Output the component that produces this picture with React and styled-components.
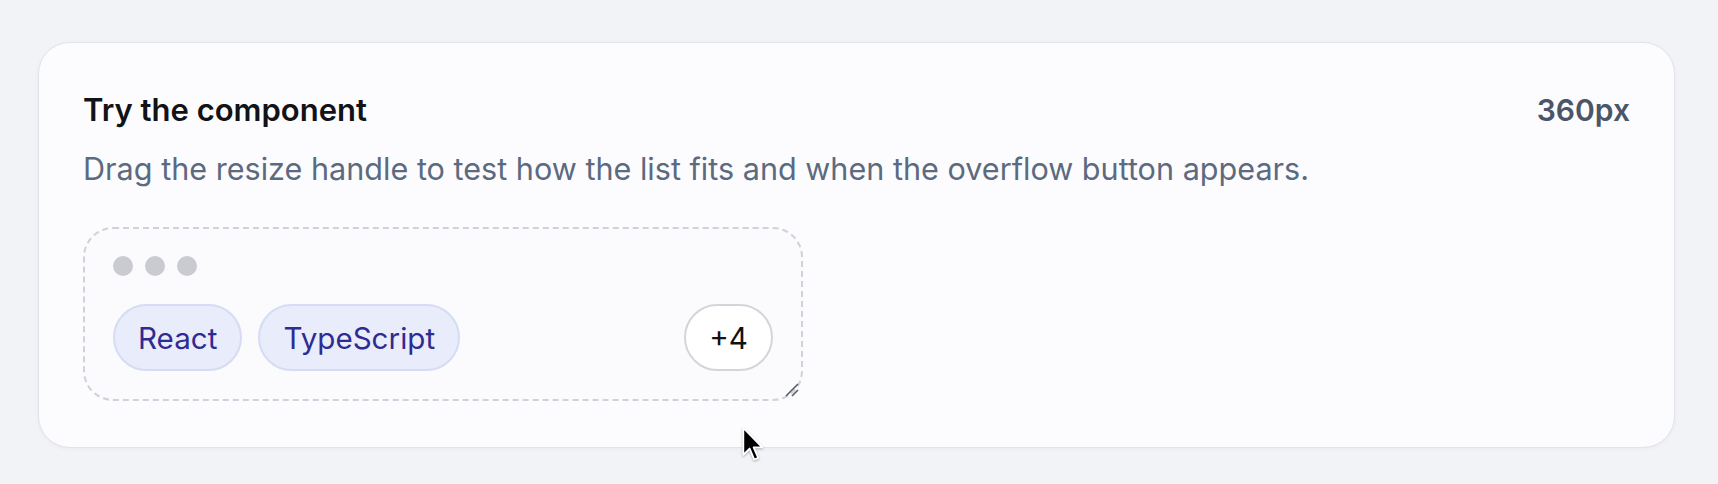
import React from "react";
import styled, { createGlobalStyle } from "styled-components";

const GlobalStyle = createGlobalStyle`
  html, body {
    margin: 0;
    padding: 0;
    background: #f2f3f7;
    font-family: Inter, "Noto Sans", "Liberation Sans", sans-serif;
  }
`;

const tags = ["React", "TypeScript"];

const App = () => {
  return (
    <Page>
      <GlobalStyle />
      <Card>
        <Header>
          <Title>Try the component</Title>
          <Width>360px</Width>
        </Header>
        <Description>
          Drag the resize handle to test how the list fits and when the overflow
          button appears.
        </Description>
        <ResizeBox>
          <Dots>
            <Dot />
            <Dot />
            <Dot />
          </Dots>
          <TagRow>
            {tags.map((t) => (
              <Tag key={t}>{t}</Tag>
            ))}
            <MoreButton>+4</MoreButton>
          </TagRow>
          <Grip viewBox="0 0 16 16">
            <line x1="15" y1="3" x2="3" y2="15" />
            <line x1="15" y1="9" x2="9" y2="15" />
          </Grip>
        </ResizeBox>
        <Cursor viewBox="0 0 20 31">
          <path
            d="M2 1.5 L2 25 L7.5 19.5 L11.5 29 L15 27.5 L11 18.5 L18.5 18.5 Z"
            fill="#000"
            stroke="#fff"
            strokeWidth="1.6"
            strokeLinejoin="round"
          />
        </Cursor>
      </Card>
    </Page>
  );
};

const Page = styled.div`
  padding: 42px 43px 36px 38px;
`;

const Card = styled.div`
  position: relative;
  display: flex;
  flex-direction: column;
  padding: 49px 44px 46px;
  background: #fcfcfe;
  border: 1px solid #e1e3e9;
  border-radius: 32px;
  box-shadow: 0 1px 4px rgba(20, 24, 40, 0.04);
`;

const Header = styled.div`
  display: flex;
  align-items: baseline;
  justify-content: space-between;
`;

const Title = styled.h2`
  margin: 0;
  font-size: 31px;
  line-height: 36px;
  font-weight: 600;
  color: #111318;
`;

const Width = styled.span`
  font-size: 30px;
  line-height: 36px;
  font-weight: 600;
  color: #4b5567;
`;

const Description = styled.p`
  margin: 23px 0 40px;
  font-size: 30.6px;
  line-height: 36px;
  font-weight: 400;
  color: #5c6a80;
`;

const ResizeBox = styled.div`
  position: relative;
  box-sizing: border-box;
  width: 720px;
  height: 174px;
  padding: 27px 28px;
  display: flex;
  flex-direction: column;
  gap: 28px;
  border: 2px dashed #cfd2da;
  border-radius: 30px;
  background: #fbfbfe;
`;

const Dots = styled.div`
  display: flex;
  gap: 12px;
`;

const Dot = styled.span`
  width: 20px;
  height: 20px;
  border-radius: 50%;
  background: #c9cbd1;
`;

const TagRow = styled.div`
  display: flex;
  align-items: center;
  gap: 16px;
`;

const Tag = styled.span`
  box-sizing: border-box;
  height: 67px;
  display: flex;
  align-items: center;
  padding: 0 23px;
  border: 2px solid #d5dcf3;
  border-radius: 999px;
  background: #e8ecfb;
  color: #2e2b91;
  font-size: 29.6px;
`;

const MoreButton = styled.button`
  box-sizing: border-box;
  margin-left: auto;
  width: 89px;
  height: 67px;
  border: 2px solid #d4d5da;
  border-radius: 999px;
  background: #ffffff;
  color: #111111;
  font-family: inherit;
  font-size: 29.6px;
  padding: 0;
`;

const Grip = styled.svg`
  position: absolute;
  right: 2px;
  bottom: 2px;
  width: 16px;
  height: 16px;
  stroke: #5a5d66;
  stroke-width: 1.6;
`;

const Cursor = styled.svg`
  position: absolute;
  left: 702px;
  top: 383px;
  width: 23px;
  height: 36px;
  filter: drop-shadow(0 1px 1px rgba(0, 0, 0, 0.3));
`;

export default App;
